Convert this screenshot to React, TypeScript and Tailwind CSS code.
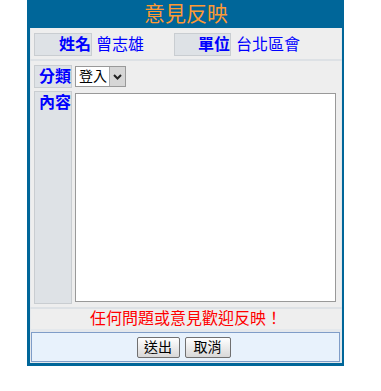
import React from 'react';

const font = { fontFamily: '"Liberation Sans", "Noto Sans CJK TC", sans-serif' };

const Label: React.FC<{ text: string; className?: string }> = ({ text, className }) => (
  <div
    className={`flex justify-end bg-[#dee2e6] border border-[#c9cdd1] text-[16px] font-bold text-[#0000ff] leading-[21px] ${className ?? ''}`}
  >
    {text}
  </div>
);

export default function App() {
  return (
    <div className="w-[381px] h-[391px] bg-white" style={font}>
      <div className="ml-[27px] w-[317px] border-l-[3px] border-r-[2px] border-b-[3px] border-[#006699] bg-[#e4e8ec]">
        {/* Header */}
        <div className="h-[28px] bg-[#006699] flex items-center justify-center text-[21px] leading-[28px] text-[#ff9933]">
          意見反映
        </div>

        {/* Name / unit row */}
        <div className="mx-px bg-[#eeeeee] h-[31px] pt-[5px] pl-[3px] flex items-start">
          <Label text="姓名" className="w-[58px] h-[23px]" />
          <div className="w-[82px] pl-[4px] text-[16px] leading-[23px] text-[#0000ff]">曾志雄</div>
          <Label text="單位" className="w-[57px] h-[23px]" />
          <div className="pl-[5px] text-[16px] leading-[23px] text-[#0000ff]">台北區會</div>
        </div>
        <div className="h-[2px] bg-[#dde1e5]" />

        {/* Category / content */}
        <div className="mx-px bg-[#eeeeee] h-[246px] pt-[4px] pl-[3px] pr-[4px] flex flex-col gap-[3px]">
          <div className="flex gap-[3px] h-[23px]">
            <Label text="分類" className="w-[38px] h-[23px]" />
            <div className="mt-px w-[51px] h-[21px] bg-white border border-[#999999] flex items-center">
              <span className="flex-1 pl-[3px] text-[14px] leading-[19px] text-black">登入</span>
              <span className="w-[16px] h-[19px] bg-[#d6d6d6] border-l border-[#aaaaaa] flex items-center justify-center">
                <svg width="9" height="6" viewBox="0 0 9 6">
                  <path d="M1 1 L4.5 4.5 L8 1" stroke="#222" strokeWidth="2" fill="none" />
                </svg>
              </span>
            </div>
          </div>
          <div className="flex gap-[3px] h-[213px]">
            <Label text="內容" className="w-[38px] h-[213px] items-start" />
            <div className="mt-[2px] w-[261px] h-[209px] bg-white border border-[#999999]" />
          </div>
        </div>
        <div className="h-[2px] bg-[#dde1e5]" />

        {/* Message */}
        <div className="mx-px bg-[#eeeeee] h-[20px] flex items-center justify-center text-[16px] leading-[20px] text-[#ff0000]">
          任何問題或意見歡迎反映！
        </div>
        <div className="h-[3px]" />

        {/* Buttons */}
        <div className="ml-px mr-[2px] h-[30px] bg-[#e8f2fc] border border-[#7f9dc8] flex items-center justify-center gap-[5px] pr-[4px]">
          <button className="w-[43px] h-[21px] border border-[#707070] rounded-[2px] bg-gradient-to-b from-white to-[#d8d8d8] text-[14px] leading-[19px] text-black">
            送出
          </button>
          <button className="w-[46px] h-[21px] border border-[#707070] rounded-[2px] bg-gradient-to-b from-white to-[#d8d8d8] text-[14px] leading-[19px] text-black">
            取消
          </button>
        </div>
        <div className="h-px" />
      </div>
    </div>
  );
}
